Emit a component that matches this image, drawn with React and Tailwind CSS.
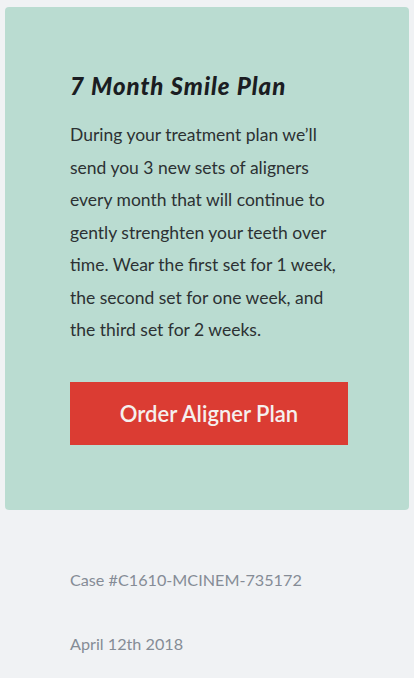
import React from 'react';

const lines = [
  'During your treatment plan we’ll',
  'send you 3 new sets of aligners',
  'every month that will continue to',
  'gently strenghten your teeth over',
  'time. Wear the first set for 1 week,',
  'the second set for one week, and',
  'the third set for 2 weeks.',
];

const App = () => {
  return (
    <div className="min-h-[678px] bg-[#f0f2f4] pt-[7px]" style={{ fontFamily: 'Lato, "Open Sans", sans-serif' }}>
      <div className="mx-[5px] rounded-[4px] bg-[#badcd1] pl-[65px] pr-[61px] pt-[64px] pb-[65px]">
        <h2 className="text-[24px] leading-[30px] font-black italic tracking-[1px] text-[#1b1d22]">
          7 Month Smile Plan
        </h2>
        <p className="mt-[18px] text-[17.5px] leading-[32.5px] text-[#2c3133]">
          {lines.map((l, i) => (
            <span key={i} className="block whitespace-nowrap">{l}</span>
          ))}
        </p>
        <button className="mt-[35px] flex h-[63px] w-full items-center justify-center bg-[#db3c33] text-[22px] font-semibold text-[#f5f0ee]">
          Order Aligner Plan
        </button>
      </div>
      <div className="pl-[70px] pt-[58px] text-[16.2px] leading-[24px] text-[#858c96]">
        <p>Case #C1610-MCINEM-735172</p>
        <p className="mt-[40px]">April 12th 2018</p>
      </div>
    </div>
  );
};

export default App;
